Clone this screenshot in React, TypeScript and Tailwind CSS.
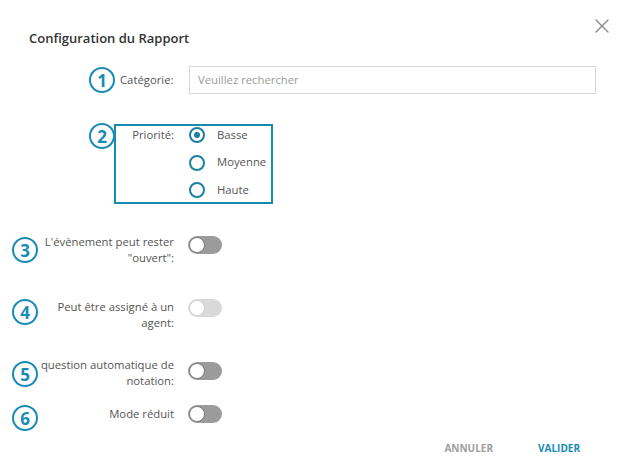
import { X } from 'lucide-react';

const TEAL = 'text-[#178bb4]';

function Num({ n, className = '' }: { n: number; className?: string }) {
  return (
    <div
      className={`flex h-[26px] w-[26px] shrink-0 items-center justify-center rounded-full border-[2.5px] border-[#178bb4] text-[17px] font-bold leading-none ${TEAL} ${className}`}
    >
      {n}
    </div>
  );
}

function Toggle({ disabled = false, className = '' }: { disabled?: boolean; className?: string }) {
  return (
    <div
      className={`flex h-[18px] w-[34px] shrink-0 items-center rounded-full px-[1px] ${
        disabled ? 'bg-[#d9d9d9]' : 'bg-[#9b9b9b]'
      } ${className}`}
    >
      <div
        className={`h-[16px] w-[16px] rounded-full border bg-white ${
          disabled ? 'border-[#d0d0d0]' : 'border-[#7a7a7a]'
        }`}
      />
    </div>
  );
}

function Radio({ checked, label }: { checked?: boolean; label: string }) {
  return (
    <div className="flex h-[18px] items-center">
      <div className="flex h-[16px] w-[16px] items-center justify-center rounded-full border-2 border-[#1c7fa6]">
        {checked && <div className="h-[6px] w-[6px] rounded-full bg-[#1c7fa6]" />}
      </div>
      <span className="ml-[12px] text-[11.3px] text-[#555]">{label}</span>
    </div>
  );
}

type Row = { n: number; lines: string[]; disabled?: boolean; numMt: string; toggleMt: string; mt: string };

const rows: Row[] = [
  { n: 3, lines: ["L'évènement peut rester", '"ouvert":'], numMt: 'mt-[3px]', toggleMt: 'mt-[2px]', mt: 'mt-[30px]' },
  { n: 4, lines: ['Peut être assigné à un', 'agent:'], disabled: true, numMt: 'mt-[0px]', toggleMt: 'mt-[0px]', mt: 'mt-[33px]' },
  { n: 5, lines: ['question automatique de', 'notation:'], numMt: 'mt-[4px]', toggleMt: 'mt-[5px]', mt: 'mt-[26px]' },
  { n: 6, lines: ['Mode réduit'], numMt: 'mt-[-1px]', toggleMt: 'mt-[-1px]', mt: 'mt-[17px]' },
];

export default function App() {
  return (
    <div className="h-[464px] w-[626px] overflow-hidden bg-white font-['Open_Sans',sans-serif]">
      <div className="flex items-start justify-between pl-[29px] pr-[12px] pt-[14px]">
        <h2 className="mt-[15px] text-[13px] font-semibold leading-[18px] text-[#333]">Configuration du Rapport</h2>
        <button type="button" className="text-[#8a8a8a]">
          <X size={24} strokeWidth={1.4} />
        </button>
      </div>

      <div className="mt-[19px] flex items-center pl-[89px] pr-[30px]">
        <Num n={1} />
        <span className="ml-[5px] w-[69px] text-[11.3px] text-[#555]">Catégorie:</span>
        <div className="flex h-[28px] flex-1 items-center border border-[#d6d6d6] px-[8px] text-[11.3px] text-[#9a9a9a]">
          Veuillez rechercher
        </div>
      </div>

      <div className="mt-[30px] flex items-start pl-[89px]">
        <Num n={2} className="-mr-[1px] mt-[-1px]" />
        <div className="flex h-[80px] w-[159px] border-2 border-[#178bb4]">
          <div className="flex h-[18px] w-[73px] items-center justify-end pr-[15px] text-[11.3px] text-[#555]">Priorité:</div>
          <div className="flex flex-col gap-[9.5px]">
            <Radio checked label="Basse" />
            <Radio label="Moyenne" />
            <Radio label="Haute" />
          </div>
        </div>
      </div>

      {rows.map((r) => (
        <div key={r.n} className={`flex items-start pl-[12px] ${r.mt}`}>
          <Num n={r.n} className={r.numMt} />
          <div className="w-[136px] whitespace-nowrap text-right text-[11.3px] leading-[16px] text-[#555]">
            {r.lines.map((l) => (
              <div key={l}>{l}</div>
            ))}
          </div>
          <Toggle disabled={r.disabled} className={`ml-[14px] ${r.toggleMt}`} />
        </div>
      ))}

      <div className="mt-[10px] flex justify-end gap-[45px] pr-[46px] text-[10px] font-bold leading-[14px]">
        <button type="button" className="text-[#9e9e9e]">ANNULER</button>
        <button type="button" className="text-[#178bb4]">VALIDER</button>
      </div>
    </div>
  );
}
